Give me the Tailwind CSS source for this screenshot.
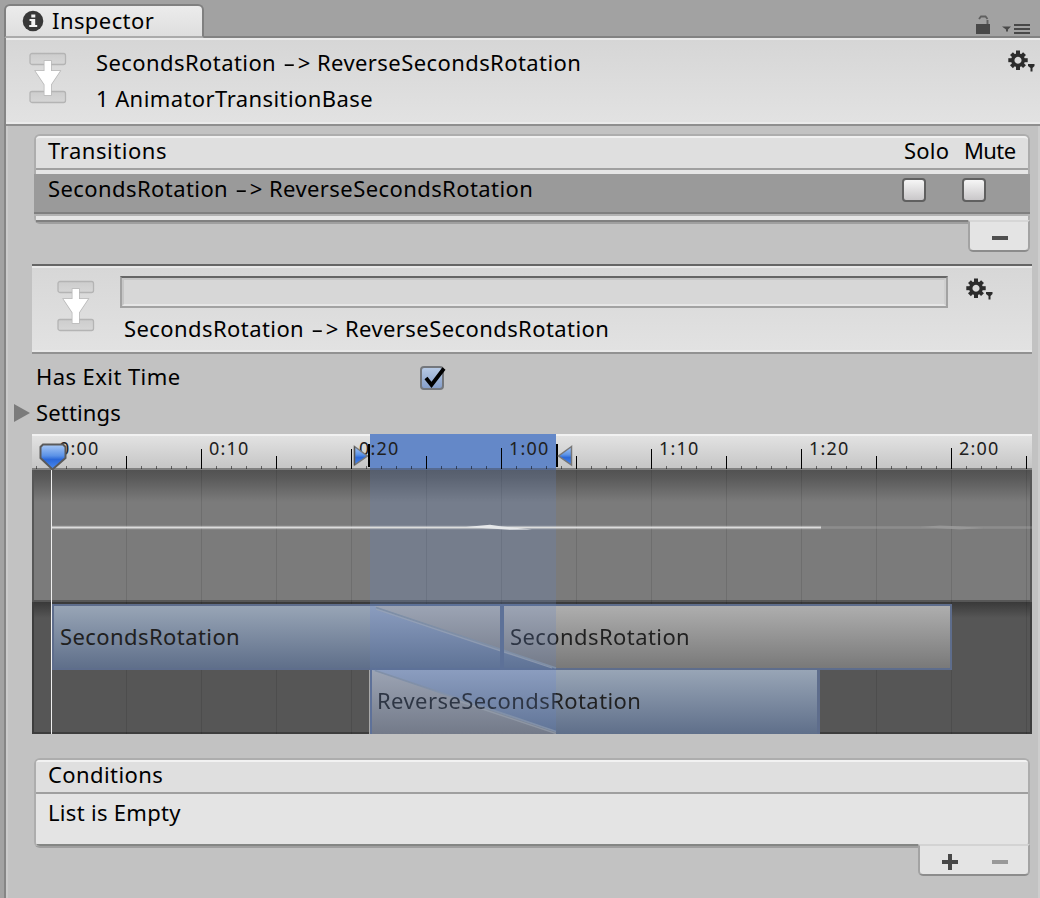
<!DOCTYPE html>
<html lang="en">
<head>
<meta charset="utf-8">
<title>Inspector</title>
<script src="https://cdn.jsdelivr.net/npm/@tailwindcss/browser@4"></script>
</head>
<body class="w-[1040px] h-[898px] overflow-hidden bg-[#a2a2a2] text-black text-[22px] leading-9 tracking-[0.42px] whitespace-nowrap" style="font-family:'Noto Sans','Open Sans',sans-serif">
<svg class="absolute w-0 h-0">
  <defs>
    <linearGradient id="slot" x1="0" y1="0" x2="0" y2="1"><stop offset="0" stop-color="#cdcdcd"/><stop offset="1" stop-color="#d6d6d6"/></linearGradient>
    <linearGradient id="blue" x1="0" y1="0" x2="0" y2="1"><stop offset="0" stop-color="#a9c9f6"/><stop offset=".45" stop-color="#5b92e6"/><stop offset=".6" stop-color="#2b68d8"/><stop offset="1" stop-color="#4b8bf0"/></linearGradient>
    <linearGradient id="clipBlue" x1="0" y1="0" x2="0" y2="1"><stop offset="0" stop-color="#98a5b6"/><stop offset="1" stop-color="#5f6f8a"/></linearGradient>
    <linearGradient id="clipGray" x1="0" y1="0" x2="0" y2="1"><stop offset="0" stop-color="#aeaeae"/><stop offset="1" stop-color="#797979"/></linearGradient>
    <linearGradient id="mixBlue" x1="0" y1="0" x2="0" y2="1"><stop offset="0" stop-color="#8b9dbf"/><stop offset="1" stop-color="#5f7396"/></linearGradient>
    <linearGradient id="mixGray" x1="0" y1="0" x2="0" y2="1"><stop offset="0" stop-color="#9ca4b4"/><stop offset="1" stop-color="#737a89"/></linearGradient>
    <linearGradient id="shade1" x1="0" y1="0" x2="0" y2="1"><stop offset="0" stop-color="#525252"/><stop offset=".25" stop-color="#5a5a5a"/><stop offset="1" stop-color="#7b7b7b"/></linearGradient>
    <linearGradient id="shade2" x1="0" y1="0" x2="0" y2="1"><stop offset="0" stop-color="#393939"/><stop offset="1" stop-color="#565656"/></linearGradient>
    <symbol id="transition" viewBox="0 0 38 52">
      <rect x="1" y="1.500" width="35.500" height="11" rx="2" fill="url(#slot)" stroke="#b4b4b4" stroke-width="1.300"/>
      <rect x="1" y="39.500" width="35.500" height="11" rx="2" fill="url(#slot)" stroke="#b4b4b4" stroke-width="1.300"/>
      <path d="M15.500 9h6.500v10h9l-9 13.500v10.500h-6.500v-10.500l-9-13.500h9z" fill="#fff" stroke="#b9b9b9" stroke-width="1.500" paint-order="stroke"/>
    </symbol>
    <symbol id="gear" viewBox="0 0 28 24">
      <g fill="#2c2c2c">
        <path fill-rule="evenodd" d="M10 3.300a6.900 6.900 0 1 0 .01 0zM10 6.700a3.500 3.500 0 1 1-.01 0z"/>
        <rect x="8" y="0.500" width="4" height="4"/><rect x="8" y="16" width="4" height="4"/><rect x="0.300" y="8.200" width="4" height="4"/><rect x="15.700" y="8.200" width="4" height="4"/>
        <g transform="rotate(45 10 10.200)"><rect x="8" y="1" width="4" height="4"/><rect x="8" y="15.500" width="4" height="4"/><rect x="0.800" y="8.200" width="4" height="4"/><rect x="15.200" y="8.200" width="4" height="4"/></g>
        <path d="M20 14h6.500v2l-2 2v3.500h-2v-3.500l-2.500-2z"/>
      </g>
    </symbol>
  </defs>
</svg>

<div class="w-full h-full pl-1 pt-1 flex flex-col">
  <!-- Tab strip -->
  <div class="h-[34px] flex justify-between shrink-0">
    <div class="w-[200px] h-[34px] rounded-t-[6px] border-2 border-[#808080] border-b-[#aaaaaa] bg-linear-to-b from-[#ececec] to-[#dedede] flex items-center">
      <svg class="ml-4 w-[22px] h-[22px]" viewBox="0 0 22 22"><circle cx="11" cy="11" r="10.300" fill="#383838"/><path d="M9.300 4.500h4v3h-4zM7.500 9h5.700v6h2v2h-8v-2h2.100v-4H7.500z" fill="#f2f2f2"/></svg>
      <span class="ml-2 relative -top-px">Inspector</span>
    </div>
    <div class="grow border-b-2 border-[#828282] flex items-end justify-end pr-[10px] gap-[11px]">
      <svg class="w-[16px] h-[19px] mb-[2px]" viewBox="0 0 16 19"><path d="M1 9h14v10H1z" fill="#484848"/><path d="M12.500 9V5M4 4l2-2.500h4.500l2 2.500" fill="none" stroke="#606060" stroke-width="1.900"/></svg>
      <svg class="w-[28px] h-[12px] mb-0" viewBox="0 0 28 12"><path d="M0 2.500h9l-3 3v2H4v-2z" fill="#4a4a4a"/><path d="M12 0h16v2H12zM12 4h16v2H12zM12 8h16v2H12z" fill="#484848"/></svg>
    </div>
  </div>

  <!-- Panel -->
  <div class="grow border-l-2 border-[#858585]">
   <div class="h-full border-l-2 border-l-[#cbcbcb] border-r-2 border-r-[#cdcdcd] bg-[#c2c2c2]">
    <div class="h-[88px] border-b-2 border-b-[#8f8f8f] -ml-0.5 -mr-0.5">
      <div class="h-full border-y-2 border-[#ebebeb] bg-linear-to-b from-[#d6d6d6] to-[#e2e2e2] flex">
        <svg class="ml-[23px] mt-[12px] w-[38px] h-[52px]"><use href="#transition"/></svg>
        <div class="ml-[29px] mt-1 grow">
          <p>SecondsRotation <span class="inline-block scale-x-170 mx-[4px]">-</span>&gt; ReverseSecondsRotation</p>
          <p>1 AnimatorTransitionBase</p>
        </div>
        <svg class="mt-[10px] mr-1 w-[28px] h-[24px]"><use href="#gear"/></svg>
      </div>
    </div>

    <!-- Transitions list -->
    <section class="mt-2 ml-[26px] w-[996px] h-[118px] flex flex-col items-end">
      <div class="w-full h-[90px] rounded-[6px] border-2 border-[#adadad] border-b-[#9f9f9f]">
        <div class="h-[34px] rounded-t-[4px] border-t-2 border-t-[#f0f0f0] border-b-2 border-b-[#a0a0a0] bg-[#dfdfdf] flex pl-3">
          <span class="grow -mt-[6px] tracking-[0.55px]">Transitions</span>
          <span class="-mt-[6px] w-[60px] tracking-[0.2px]">Solo</span><span class="-mt-[6px] w-[64px] tracking-[-0.6px]">Mute</span>
        </div>
        <div class="h-[50px] border-t-4 border-b-4 border-[#e5e5e5]">
          <div class="h-[42px] -mx-0.5 bg-[#9a9a9a] border-b-2 border-[#b2b2b2]">
            <div class="h-[40px] border-b-2 border-[#7f7f7f] flex items-start pl-[14px]">
              <span class="grow -mt-1">SecondsRotation <span class="inline-block scale-x-170 mx-[4px]">-</span>&gt; ReverseSecondsRotation</span>
              <i class="mt-1 mr-9 w-6 h-6 rounded-[4px] border-2 border-[#606060] bg-linear-to-b from-[#f6f6f6] to-[#c9c7c9]"></i>
              <i class="mt-1 mr-[44px] w-6 h-6 rounded-[4px] border-2 border-[#606060] bg-linear-to-b from-[#f6f6f6] to-[#c9c7c9]"></i>
            </div>
          </div>
        </div>
        <div class="h-0.5 bg-[#808080]"></div>
      </div>
      <div class="relative -mt-1 w-[62px] h-8 rounded-b-[5px] border-2 border-t-[#d6d6d6] border-x-[#a3a3a3] border-b-[#8c8c8c] bg-[#e4e4e4] flex justify-center pl-[2px] pt-[14px]"><b class="w-4 h-1 bg-[#4f4f4f]"></b></div>
    </section>

    <!-- Selected transition -->
    <section class="mt-[12px] ml-[24px] w-[1000px] h-[90px] border-t-2 border-t-[#656565] border-b-2 border-b-[#929292]">
      <div class="h-full border-y-2 border-[#e9e9e9] bg-linear-to-b from-[#d7d7d7] to-[#e2e2e2] flex">
        <svg class="ml-[25px] mt-[12px] w-[38px] h-[52px]"><use href="#transition"/></svg>
        <div class="ml-[25px] mt-2 w-[828px]">
          <div class="h-8 border-2 border-[#a2a2a2] border-t-[#666666]"><div class="h-full border-2 border-[#c6c6c6] border-b-[#e6e6e6] border-r-[#cfcfcf] bg-[#d7d7d7]"></div></div>
          <p class="ml-1 mt-[2px]">SecondsRotation <span class="inline-block scale-x-170 mx-[4px]">-</span>&gt; ReverseSecondsRotation</p>
        </div>
        <svg class="ml-[18px] mt-[10px] w-[28px] h-[24px]"><use href="#gear"/></svg>
      </div>
    </section>

    <div class="h-9 mt-1 pl-7 flex">
      <span class="w-[384px]">Has Exit Time</span>
      <svg class="mt-[7px] w-[28px] h-[26px]" viewBox="0 0 28 26"><defs><linearGradient id="chk" x1="0" y1="0" x2="0" y2="1"><stop offset="0" stop-color="#b9cce6"/><stop offset="1" stop-color="#839cc8"/></linearGradient></defs><rect x="1" y="2" width="22" height="22" rx="3" fill="url(#chk)" stroke="#74777c" stroke-width="2"/><path d="M6 13l5.500 7L24 3.500" fill="none" stroke="#000" stroke-width="3.800"/></svg>
    </div>
    <div class="h-9 pl-[6px] flex">
      <svg class="mt-[10px] mr-[6px] w-4 h-[18px]" viewBox="0 0 16 18"><path d="M0 0l16 9-16 9z" fill="#7b7b7b"/></svg>
      <span class="tracking-[0.15px]">Settings</span>
    </div>

    <!-- Timeline canvas -->
    <section class="relative mt-1 ml-[24px] w-[1000px] h-[300px] overflow-hidden text-[#202020]">
      <div class="h-9 border-t-2 border-t-[#f1f1f1] border-b-2 border-b-[#808080] bg-linear-to-b from-[#e2e2e2] to-[#c6c6c6]"></div>
      <svg class="absolute inset-0" width="1000" height="300" viewBox="32 434 1000 300">
        <rect x="32" y="470" width="1000" height="132" fill="#575757"/>
        <rect x="34" y="470" width="996" height="130" fill="#7b7b7b"/>
        <rect x="34" y="470" width="996" height="32" fill="url(#shade1)"/>
        <rect x="32" y="602" width="1000" height="132" fill="#3d3d3d"/>
        <rect x="34" y="604" width="996" height="128" fill="#565656"/>
        <rect x="34" y="602" width="996" height="16" fill="url(#shade2)"/>
        <path stroke="#000" stroke-opacity=".1" d="M126.500 470V734M201.500 470V734M276.500 470V734M351.500 470V734M426.500 470V734M501.500 470V734M576.500 470V734M651.500 470V734M726.500 470V734M801.500 470V734M876.500 470V734M951.500 470V734M1026.500 470V734"/>
        <path fill="#6488c8" d="M370 434h186v36H370z"/>
        <path fill="#6484c0" fill-opacity=".25" d="M370 470h186v134H370z"/>
        <path fill="#566a90" d="M370 468h186v2H370z"/>
        <!-- ruler ticks -->
        <path stroke="#000" stroke-opacity=".5" stroke-dasharray="1 14" stroke-width="3" d="M36 467.500H1032"/>
        <path stroke="#000" d="M126.500 456V469M276.500 456V469M426.500 456V469M576.500 456V469M726.500 456V469M876.500 456V469M1026.500 456V469M201.500 449V469M351.500 449V469M501.500 448V469M651.500 449V469M801.500 449V469M951.500 448V469"/>
        <!-- preview curve -->
        <path stroke="#fff" stroke-opacity=".3" stroke-width="3.500" d="M52 527.500H821"/>
        <path stroke="#dcdcdc" stroke-width="1.500" d="M52 527.500H821"/>
        <path stroke="#fff" stroke-opacity=".14" stroke-width="2.500" d="M821 527.500H1032"/>
        <path fill="#e6e8ea" d="M466 527l24-2.300 12 1.800 30 3-22 .3z"/>
        <path fill="#9d9d9d" fill-opacity=".7" d="M920 527l20-1.500 18 .8 26 1.700-24 1.500z"/>
        <!-- clips -->
        <rect x="52" y="604" width="450" height="66" fill="#5e6d8c"/>
        <rect x="54" y="606" width="446" height="62" fill="url(#clipBlue)"/>
        <rect x="502" y="604" width="450" height="66" fill="#5e6d8c"/>
        <rect x="504" y="606" width="446" height="62" fill="url(#clipGray)"/>
        <rect x="370" y="670" width="450" height="64" fill="#5e6d8c"/>
        <rect x="372" y="670" width="445" height="64" fill="url(#clipBlue)"/>
        <rect x="369" y="670" width="1" height="64" fill="#a9a9a9"/>
        <!-- blend zone -->
        <rect x="370" y="604" width="186" height="66" fill="#5d7198"/>
        <rect x="370" y="606" width="186" height="62" fill="url(#mixBlue)"/>
        <path d="M374 606H556V668z" fill="url(#mixGray)"/>
        <path d="M376 607.500L556 668" fill="none" stroke="#7f8fa6" stroke-width="1.800"/>
        <path d="M376 609.200L552 668" fill="none" stroke="#9aa4b5" stroke-opacity=".7" stroke-width="1.300"/>
        <rect x="370" y="670" width="186" height="64" fill="url(#mixBlue)"/>
        <path d="M372 670L556 732V734H372z" fill="url(#mixGray)"/>
        <path d="M375 670.500L556 731.500" fill="none" stroke="#8190a8" stroke-width="1.800"/>
        <path d="M460 701.500L556 733.500" fill="none" stroke="#9aa3b0" stroke-opacity=".6" stroke-width="1.500"/>
        <path d="M370 670h2v64h-2z" fill="#5e7199"/>
        <path d="M500 604h4v66h-4z" fill="#5d7198"/>
      </svg>
      <div class="absolute left-[27px] -top-px text-[18px] leading-[30px] tracking-[1.2px]">0:00</div>
      <div class="absolute left-[177px] -top-px text-[18px] leading-[30px] tracking-[1.2px]">0:10</div>
      <div class="absolute left-[327px] -top-px text-[18px] leading-[30px] tracking-[1.2px]">0:20</div>
      <div class="absolute left-[477px] -top-px text-[18px] leading-[30px] tracking-[1.2px]">1:00</div>
      <div class="absolute left-[627px] -top-px text-[18px] leading-[30px] tracking-[1.2px]">1:10</div>
      <div class="absolute left-[777px] -top-px text-[18px] leading-[30px] tracking-[1.2px]">1:20</div>
      <div class="absolute left-[927px] -top-px text-[18px] leading-[30px] tracking-[1.2px]">2:00</div>
      <div class="absolute left-[28px] top-[184px]">SecondsRotation</div>
      <div class="absolute left-[478px] top-[184px] bg-linear-to-r from-[#2d3544] from-[46px] to-[#202020] to-[46px] bg-clip-text text-transparent">SecondsRotation</div>
      <div class="absolute left-[345px] top-[248px] bg-linear-to-r from-[#2d3544] from-[179px] to-[#202020] to-[179px] bg-clip-text text-transparent">ReverseSecondsRotation</div>
      <!-- range handles and playhead -->
      <svg class="absolute inset-0" width="1000" height="300" viewBox="32 434 1000 300">
        <path d="M51.500 470V734" stroke="#f0f0f0"/>
        <path d="M43 444.500h20l2.500 2.500v11L52.500 469.500L40.500 458v-11z" fill="url(#blue)" stroke="#5a5a5a" stroke-width="2"/>
        <path d="M354.500 446.500L367.500 456L354.500 465z" fill="url(#blue)" stroke="#777" stroke-width="1.500"/>
        <path d="M354.500 446.500V465" stroke="#555" stroke-width="1.300"/>
        <path d="M368 444h2v23h-2zM556 444h2v23h-2z" fill="#000"/>
        <path d="M571.500 446.500L558.500 456L571.500 465z" fill="url(#blue)" stroke="#777" stroke-width="1.500"/>
      </svg>
    </section>

    <!-- Conditions list -->
    <section class="mt-6 ml-[26px] w-[996px] flex flex-col items-end">
      <div class="w-full h-[90px] rounded-[6px] border-2 border-[#adadad] border-b-[#9f9f9f] bg-[#e4e4e4] overflow-hidden">
        <div class="h-[34px] border-t-2 border-t-[#f2f2f2] border-b-2 border-b-[#9f9f9f] bg-[#dfdfdf] pl-3"><p class="-mt-[6px]">Conditions</p></div>
        <div class="h-[52px] border-b-2 border-[#848684] pl-3 tracking-[0.3px]">List is Empty</div>
      </div>
      <div class="relative -mt-1 w-[112px] h-8 rounded-b-[5px] border-2 border-t-[#d3d3d3] border-x-[#a3a3a3] border-b-[#8c8c8c] bg-[#e4e4e4] pl-[22px] pt-[8px]">
        <svg class="w-[66px] h-4" viewBox="0 0 66 16"><path d="M6 0h4v6h6v4h-6v6H6v-6H0V6h6z" fill="#484848"/><path d="M50 6h16v4H50z" fill="#999"/></svg>
      </div>
    </section>
   </div>
  </div>
</div>
</body>
</html>
